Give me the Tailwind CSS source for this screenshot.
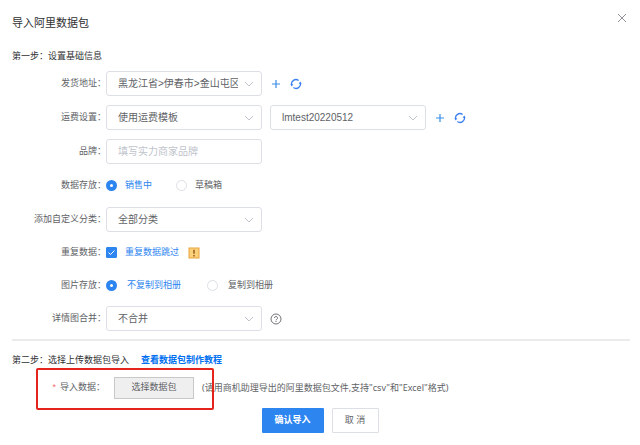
<!DOCTYPE html>
<html lang="zh-CN">
<head>
  <meta charset="UTF-8">
  <meta name="viewport" content="width=device-width, initial-scale=1.0">
  <title>导入阿里数据包</title>
  <script src="https://cdn.jsdelivr.net/npm/@tailwindcss/browser@4"></script>
</head>
<body class="bg-white text-[#606266] text-[9px] font-['Liberation_Sans','Noto_Sans_CJK_SC',sans-serif]">

  <!-- Icons used more than once -->
  <svg class="hidden">
    <symbol id="chevron" viewBox="0 0 10 10"><path d="M1 3l4 4 4-4" fill="none" stroke="#c0c4cc" stroke-width="1"/></symbol>
    <symbol id="plus" viewBox="0 0 10 10"><path d="M5 1v8M1 5h8" fill="none" stroke="#3a8ee6" stroke-width="1.2"/></symbol>
    <symbol id="refresh" viewBox="0 0 12 12">
      <path d="M1.7 7.2A4.4 4.4 0 0 1 8.6 2.5M10.3 4.8A4.4 4.4 0 0 1 3.4 9.5" fill="none" stroke="#3a7ff0" stroke-width="1.3"/>
      <path d="M0.4 6.2h3L1.7 8.4zM11.6 5.8h-3l1.7-2.2z" fill="#3a7ff0"/>
    </symbol>
  </svg>

  <div class="pt-3 pb-3">

    <!-- Header -->
    <header class="flex justify-between items-start pl-3 pr-3 h-9">
      <h1 class="text-[11px] leading-[22px] text-[#303133]">导入阿里数据包</h1>
      <button type="button" aria-label="关闭" class="w-3 h-3">
        <svg class="w-3 h-3" viewBox="0 0 12 12"><path d="M2 2l8 8M10 2l-8 8" stroke="#909399" stroke-width="1"/></svg>
      </button>
    </header>

    <form>
      <!-- Step 1 -->
      <h2 class="pl-3 mb-[7px] h-4 leading-4 text-[#303133]">第一步：设置基础信息</h2>

      <div class="grid gap-[9px]">
        <div class="flex items-center h-[25px]">
          <label for="address" class="w-[106px] shrink-0 text-right">发货地址：</label>
          <div class="grid items-center w-[156px]">
            <select id="address" class="col-start-1 row-start-1 appearance-none w-full h-[25px] border border-[#dcdfe6] rounded-[3px] pl-[11px] pr-[23px] text-[10px]">
              <option>黑龙江省&gt;伊春市&gt;金山屯区</option>
            </select>
            <svg class="col-start-1 row-start-1 justify-self-end mr-2 w-[10px] h-[10px] pointer-events-none"><use href="#chevron"/></svg>
          </div>
          <button type="button" aria-label="添加地址" class="ml-[9px]"><svg class="w-[10px] h-[10px]"><use href="#plus"/></svg></button>
          <button type="button" aria-label="刷新地址" class="ml-[9px]"><svg class="w-3 h-3"><use href="#refresh"/></svg></button>
        </div>

        <div class="flex items-center h-[25px]">
          <label for="freight" class="w-[106px] shrink-0 text-right">运费设置：</label>
          <div class="grid items-center w-[156px]">
            <select id="freight" class="col-start-1 row-start-1 appearance-none w-full h-[25px] border border-[#dcdfe6] rounded-[3px] pl-[11px] pr-[23px] text-[10px]">
              <option>使用运费模板</option>
            </select>
            <svg class="col-start-1 row-start-1 justify-self-end mr-2 w-[10px] h-[10px] pointer-events-none"><use href="#chevron"/></svg>
          </div>
          <div class="grid items-center w-[156px] ml-2">
            <select aria-label="运费模板" class="col-start-1 row-start-1 appearance-none w-full h-[25px] border border-[#dcdfe6] rounded-[3px] pl-[11px] pr-[23px] text-[10px]">
              <option>lmtest20220512</option>
            </select>
            <svg class="col-start-1 row-start-1 justify-self-end mr-2 w-[10px] h-[10px] pointer-events-none"><use href="#chevron"/></svg>
          </div>
          <button type="button" aria-label="添加模板" class="ml-[9px]"><svg class="w-[10px] h-[10px]"><use href="#plus"/></svg></button>
          <button type="button" aria-label="刷新模板" class="ml-[9px]"><svg class="w-3 h-3"><use href="#refresh"/></svg></button>
        </div>

        <div class="flex items-center h-[25px]">
          <label for="brand" class="w-[106px] shrink-0 text-right">品牌：</label>
          <input id="brand" type="text" placeholder="填写实力商家品牌" class="w-[156px] h-[25px] border border-[#dcdfe6] rounded-[3px] px-[11px] text-[10px] placeholder:text-[#c0c4cc]">
        </div>

        <div class="flex items-center h-[25px]" role="radiogroup" aria-labelledby="store-label">
          <span id="store-label" class="w-[106px] shrink-0 text-right">数据存放：</span>
          <input id="selling" type="radio" name="store" checked class="appearance-none w-[11px] h-[11px] rounded-full border border-[#dcdfe6] checked:border-4 checked:border-[#2d85f0]">
          <label for="selling" class="ml-2 w-[51px] text-[#2d85f0]">销售中</label>
          <input id="draft" type="radio" name="store" class="appearance-none w-[11px] h-[11px] rounded-full border border-[#dcdfe6] checked:border-4 checked:border-[#2d85f0]">
          <label for="draft" class="ml-2">草稿箱</label>
        </div>

        <div class="flex items-center h-[25px]">
          <label for="category" class="w-[106px] shrink-0 text-right">添加自定义分类：</label>
          <div class="grid items-center w-[156px]">
            <select id="category" class="col-start-1 row-start-1 appearance-none w-full h-[25px] border border-[#dcdfe6] rounded-[3px] pl-[11px] pr-[23px] text-[10px]">
              <option>全部分类</option>
            </select>
            <svg class="col-start-1 row-start-1 justify-self-end mr-2 w-[10px] h-[10px] pointer-events-none"><use href="#chevron"/></svg>
          </div>
        </div>
      </div>

      <div class="grid gap-2 mt-2">
        <div class="flex items-center h-[25px]">
          <span class="w-[106px] shrink-0 text-right">重复数据：</span>
          <div class="grid place-items-center">
            <input id="skip" type="checkbox" checked class="col-start-1 row-start-1 appearance-none w-[11px] h-[11px] rounded-[1px] border border-[#dcdfe6] checked:bg-[#2d85f0] checked:border-[#2d85f0]">
            <svg class="col-start-1 row-start-1 w-[9px] h-[9px] pointer-events-none" viewBox="0 0 9 9"><path d="M1.5 4.5l2 2 4-4" fill="none" stroke="#fff" stroke-width="1"/></svg>
          </div>
          <label for="skip" class="ml-2 w-[63px] text-[#2d85f0]">重复数据跳过</label>
          <svg class="w-3 h-3" viewBox="0 0 12 12">
            <rect x="1" y="1" width="10" height="10" fill="#fbd07a" stroke="#e8a33c" stroke-width="1"/>
            <path d="M6 2.8v4M6 8v1.4" stroke="#8a4a10" stroke-width="1.3"/>
          </svg>
        </div>

        <div class="flex items-center h-[25px]" role="radiogroup" aria-labelledby="image-label">
          <span id="image-label" class="w-[106px] shrink-0 text-right">图片存放：</span>
          <input id="nocopy" type="radio" name="image" checked class="appearance-none w-[11px] h-[11px] rounded-full border border-[#dcdfe6] checked:border-4 checked:border-[#2d85f0]">
          <label for="nocopy" class="ml-[10px] w-[80px] text-[#2d85f0]">不复制到相册</label>
          <input id="copy" type="radio" name="image" class="appearance-none w-[11px] h-[11px] rounded-full border border-[#dcdfe6] checked:border-4 checked:border-[#2d85f0]">
          <label for="copy" class="ml-[10px]">复制到相册</label>
        </div>

        <div class="flex items-center h-[25px]">
          <label for="merge" class="w-[106px] shrink-0 text-right">详情图合并：</label>
          <div class="grid items-center w-[156px]">
            <select id="merge" class="col-start-1 row-start-1 appearance-none w-full h-[25px] border border-[#dcdfe6] rounded-[3px] pl-[11px] pr-[23px] text-[10px]">
              <option>不合并</option>
            </select>
            <svg class="col-start-1 row-start-1 justify-self-end mr-2 w-[10px] h-[10px] pointer-events-none"><use href="#chevron"/></svg>
          </div>
          <svg class="ml-2 w-3 h-3" viewBox="0 0 12 12">
            <circle cx="6" cy="6" r="5" fill="none" stroke="#606266" stroke-width="0.9"/>
            <path d="M4.5 5a1.5 1.5 0 1 1 2.2 1.3Q6 6.6 6 7.3M6 8v1" fill="none" stroke="#606266" stroke-width="0.9"/>
          </svg>
        </div>
      </div>

      <hr class="ml-3 mr-[10px] mt-2 border-t-2 border-[#ebebeb]">

      <!-- Step 2 -->
      <div class="flex gap-3 pl-3 mt-[11px] h-4 leading-4">
        <h2 class="text-[#303133]">第二步：选择上传数据包导入</h2>
        <a href="#" class="font-bold text-[#0070f0]">查看数据包制作教程</a>
      </div>

      <div class="relative flex items-center mt-2 h-6">
        <label for="package" class="w-[105px] shrink-0 text-right"><span class="text-[#f56c6c] mr-1">*</span>导入数据：</label>
        <button id="package" type="button" class="ml-[9px] w-20 h-[22px] bg-[#efefef] border border-[#c8c8c8]">选择数据包</button>
        <span class="ml-2 font-['Noto_Sans','Noto_Sans_CJK_SC',sans-serif]">(请用商机助理导出的阿里数据包文件,支持"csv"和"Excel"格式)</span>
        <!-- Highlight -->
        <div class="absolute left-9 -top-2 w-[178px] h-[42px] border-2 border-[#e3231c] rounded-[2px] pointer-events-none"></div>
      </div>

      <!-- Footer -->
      <div class="flex justify-center gap-2 mt-2">
        <button type="submit" class="w-[62px] h-[25px] bg-[#2d85f0] rounded-[1px] text-white font-bold">确认导入</button>
        <button type="button" class="w-[47px] h-[25px] border border-[#dcdfe6] rounded-[1px]">取 消</button>
      </div>
    </form>
  </div>

</body>
</html>
